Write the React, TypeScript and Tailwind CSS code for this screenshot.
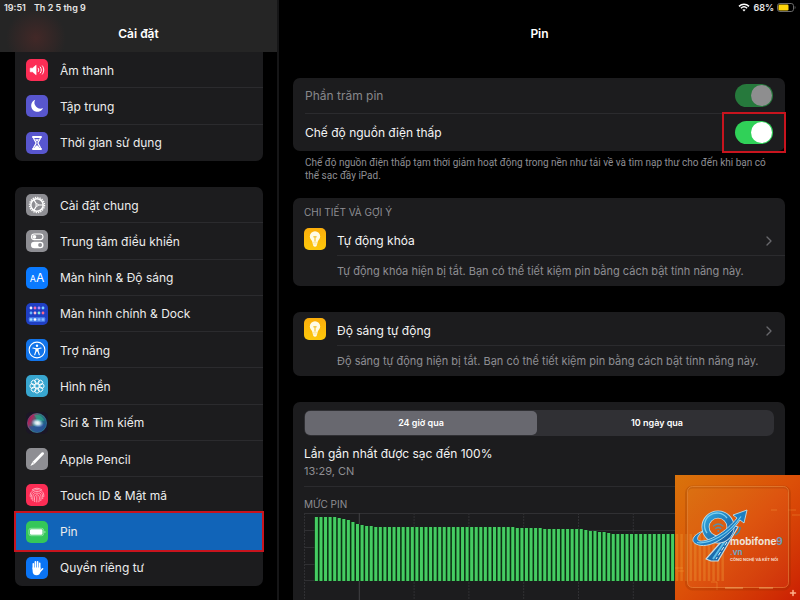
import type { ReactNode } from "react";
import { ChevronRight } from "lucide-react";
import clsx from "clsx";

interface SettingItem {
  label: string;
  tile: string;
  icon: ReactNode;
  active?: boolean;
}

/* ---------- sidebar glyphs, all on a 22 x 22 grid ---------- */

function Glyph({ children }: { children: ReactNode }) {
  return (
    <svg viewBox="0 0 22 22" className="h-full w-full" fill="none" aria-hidden>
      {children}
    </svg>
  );
}

function SoundIcon() {
  return (
    <Glyph>
      <path d="M4.2 9.2h2.3l3.6-3v9.6l-3.6-3H4.2z" fill="#fff" stroke="#fff" strokeWidth=".6" strokeLinejoin="round" />
      <g stroke="#fff" strokeWidth="1" strokeLinecap="round">
        <path d="M12.2 9.2c.8 1 .8 2.600 0 3.600" />
        <path d="M14.300 8c1.400 1.800 1.400 4.200 0 6" />
        <path d="M16.400 6.900c1.900 2.500 1.900 5.700 0 8.200" />
      </g>
    </Glyph>
  );
}

function MoonIcon() {
  return (
    <Glyph>
      <path d="M9.200 4.800a6 6 0 0 0 7.900 8.200A6.200 6.200 0 1 1 9.200 4.800z" fill="#fff" />
    </Glyph>
  );
}

function HourglassIcon() {
  return (
    <Glyph>
      <path
        d="M7.500 5c0 3.200 2.500 4.200 2.500 6s-2.500 2.800-2.500 6h7c0-3.200-2.500-4.200-2.500-6s2.500-2.800 2.500-6z"
        stroke="#fff"
        strokeWidth="1.300"
        strokeLinejoin="round"
      />
      <path d="M7 4.900h8M7 17.100h8" stroke="#fff" strokeWidth="2" strokeLinecap="round" />
      <path d="M9 7.300h4L11 9.800zM8.300 16.500c.4-1.600 1.500-2.400 2.700-3.200 1.200.8 2.300 1.600 2.700 3.200z" fill="#fff" />
    </Glyph>
  );
}

function GearIcon() {
  return (
    <Glyph>
      <circle cx="11" cy="11" r="7.500" stroke="#fff" strokeWidth="1.400" strokeDasharray="1.300 1.056" />
      <circle cx="11" cy="11" r="6.200" stroke="#fff" strokeWidth="1.500" />
      <path d="M12 11h5M10.500 10.100 8 5.900M10.500 11.900l-2.500 4.200" stroke="#fff" strokeWidth="1.100" />
      <circle cx="11" cy="11" r="1.200" stroke="#fff" strokeWidth=".9" />
    </Glyph>
  );
}

function ControlCenterIcon() {
  return (
    <Glyph>
      <rect x="5.500" y="4" width="11.500" height="5.600" rx="2.800" stroke="#fff" strokeWidth="1.100" />
      <circle cx="8.400" cy="6.800" r="1.900" fill="#fff" />
      <rect x="5" y="11.700" width="12.500" height="6.600" rx="3.300" fill="#fff" />
      <circle cx="14.100" cy="15" r="2" fill="#8e8e93" />
    </Glyph>
  );
}

function DisplayIcon() {
  return (
    <span className="text-[12px] leading-none text-white">
      <span className="text-[9px]">A</span>A
    </span>
  );
}

const dockDots = [
  ["#e8f0ff", "#f06ab0", "#b38cff", "#7fd0ff"],
  ["#6ab8ff", "#ffb8d0", "#7ce8e0", "#ff6a8c"],
];

function DockIcon() {
  return (
    <Glyph>
      {dockDots.map((row, y) =>
        row.map((fill, x) => (
          <circle key={`${x}-${y}`} cx={5 + x * 4} cy={5 + y * 5} r="1.400" fill={fill} />
        )),
      )}
      <rect x="2.800" y="14.300" width="16.400" height="4.400" rx="1" fill="#4f87f0" />
      {["#9fe0ff", "#fff", "#8cb8ff", "#8cb8ff"].map((fill, x) => (
        <circle key={x} cx={5 + x * 4} cy="16.500" r="1.300" fill={fill} />
      ))}
    </Glyph>
  );
}

function AccessibilityIcon() {
  return (
    <Glyph>
      <circle cx="11" cy="11" r="7.900" stroke="#fff" strokeWidth="1.100" />
      <circle cx="11" cy="6.800" r="1.200" fill="#fff" />
      <path
        d="M6.900 9l3.100.7v2.300L8.700 15.700M15.100 9l-3.100.7v2.300l1.300 3.700"
        stroke="#fff"
        strokeWidth="1.100"
        strokeLinecap="round"
        strokeLinejoin="round"
      />
      <path d="M9.800 9.300h2.400v3.200H9.800z" fill="#fff" />
    </Glyph>
  );
}

function WallpaperIcon() {
  return (
    <Glyph>
      {[0, 45, 90, 135, 180, 225, 270, 315].map((deg) => (
        <circle key={deg} cx="11" cy="6.200" r="2.300" stroke="#fff" strokeWidth=".9" transform={`rotate(${deg} 11 11)`} />
      ))}
      <circle cx="11" cy="11" r="2.100" stroke="#fff" strokeWidth=".9" />
    </Glyph>
  );
}

function SiriIcon() {
  return (
    <Glyph>
      <defs>
        <radialGradient id="siri-core">
          <stop offset="0" stopColor="#fff" />
          <stop offset=".4" stopColor="#e8f4ff" stopOpacity=".8" />
          <stop offset="1" stopColor="#8cc8ff" stopOpacity="0" />
        </radialGradient>
        <linearGradient id="siri-orb" x1="0" y1="0" x2="1" y2=".5">
          <stop offset="0" stopColor="#3a1030" />
          <stop offset=".25" stopColor="#b0225c" />
          <stop offset=".55" stopColor="#2f7a78" />
          <stop offset="1" stopColor="#1d5a8c" />
        </linearGradient>
      </defs>
      <circle cx="11" cy="11" r="9.800" fill="url(#siri-orb)" />
      <path d="M3 14c4 1 8-1 16-2-1 5-4.500 8-8 8s-6.500-2-8-6z" fill="#2d4f9c" opacity=".75" />
      <path d="M8 3c5-1 9 2 10.500 6-3-1-5 1-7.500 2C11 8 10 5 8 3z" fill="#2cae8c" opacity=".6" />
      <ellipse cx="11.500" cy="11" rx="6.500" ry="4.500" fill="url(#siri-core)" transform="rotate(12 11.500 11)" />
      <circle cx="11" cy="11" r="9.600" stroke="#5a9cc0" strokeWidth=".5" opacity=".6" />
    </Glyph>
  );
}

function PencilIcon() {
  return (
    <Glyph>
      <path d="M15.700 4.600a1.300 1.300 0 0 1 1.900 1.900L8.400 15.900l-4 2.100 2-4.100z" fill="#fff" />
      <path d="M6.500 14l1.800 1.800" stroke="#8e8e93" strokeWidth=".6" />
    </Glyph>
  );
}

function TouchIdIcon() {
  return (
    <Glyph>
      <g stroke="#ffc4cf" strokeWidth=".8" strokeLinecap="round">
        <path d="M6.200 5.800a7.500 7.500 0 0 1 9.600 0" />
        <path d="M4.200 12.500C3.600 8.500 6.500 5.700 11 5.700s7.400 2.800 6.800 6.800" />
        <path d="M5.300 15c-.5-4.500 1-7.600 5.700-7.600s6.200 3.100 5.700 7.300" />
        <path d="M6.900 16.700C6.400 12 7 9.100 11 9.100s4.600 2.900 3.800 7.500" />
        <path d="M8.700 17.600c-.5-4-.4-6.800 2.300-6.800s2.700 3.200 1.900 7" />
        <path d="M10.800 12.500V18" />
      </g>
    </Glyph>
  );
}

function BatteryTileIcon() {
  return (
    <Glyph>
      <rect x="2.900" y="7.300" width="14.700" height="7.400" rx="2" stroke="#b8f0c4" strokeWidth=".6" />
      <rect x="4" y="8.300" width="12.500" height="5.400" rx="1.200" fill="#fff" />
      <path d="M18.600 9.700c1 .4 1 2.200 0 2.600z" fill="#d8f8e0" />
    </Glyph>
  );
}

function HandIcon() {
  return (
    <Glyph>
      <path d="M6.600 10.500h7.900v3.500c0 2.700-1.600 4.300-3.900 4.300-2.600 0-4-1.600-4-4.300z" fill="#fff" />
      <path
        d="M7.300 12V6.800M9.400 11V4.700M11.600 11V4.700M13.700 11.500V6.300M13.300 15.300l3.300-3.500"
        stroke="#fff"
        strokeWidth="1.600"
        strokeLinecap="round"
      />
    </Glyph>
  );
}

function BulbIcon() {
  return (
    <Glyph>
      <path
        d="M11 3.300a5.200 5.200 0 0 1 5.200 5.200c0 2.300-1.700 3.400-2.300 4.800-.6 1.600-.7 3.300-1.300 4.600-.5 1.100-2.700 1.100-3.200 0-.6-1.300-.7-3-1.300-4.600-.6-1.400-2.300-2.500-2.300-4.800A5.200 5.200 0 0 1 11 3.300z"
        fill="#fffbe6"
      />
      <path d="M9.300 8.800h3.400M11 8.800v4.700" stroke="#f0b400" strokeWidth=".9" />
      <path d="M9 14.300h4M9.300 16h3.400" stroke="#f6cf4a" strokeWidth=".5" />
    </Glyph>
  );
}

const topItems: SettingItem[] = [
  { label: "Âm thanh", tile: "bg-[#fc2d55]", icon: <SoundIcon /> },
  { label: "Tập trung", tile: "bg-[#5856ce]", icon: <MoonIcon /> },
  { label: "Thời gian sử dụng", tile: "bg-[#5856ce]", icon: <HourglassIcon /> },
];

const mainItems: SettingItem[] = [
  { label: "Cài đặt chung", tile: "bg-[#8e8e93]", icon: <GearIcon /> },
  { label: "Trung tâm điều khiển", tile: "bg-[#8e8e93]", icon: <ControlCenterIcon /> },
  { label: "Màn hình & Độ sáng", tile: "bg-[#0a7aff]", icon: <DisplayIcon /> },
  { label: "Màn hình chính & Dock", tile: "bg-[#1f3fc4]", icon: <DockIcon /> },
  { label: "Trợ năng", tile: "bg-[#1274ea]", icon: <AccessibilityIcon /> },
  { label: "Hình nền", tile: "bg-[#38a6cf]", icon: <WallpaperIcon /> },
  { label: "Siri & Tìm kiếm", tile: "bg-[#1b1626]", icon: <SiriIcon /> },
  { label: "Apple Pencil", tile: "bg-[#8e8e93]", icon: <PencilIcon /> },
  { label: "Touch ID & Mật mã", tile: "bg-[#fc2d55]", icon: <TouchIdIcon /> },
  { label: "Pin", tile: "bg-[#34c759]", icon: <BatteryTileIcon />, active: true },
  { label: "Quyền riêng tư", tile: "bg-[#0a74f5]", icon: <HandIcon /> },
];

function SidebarRow({ item, last, beforeActive }: { item: SettingItem; last: boolean; beforeActive: boolean }) {
  return (
    <li className="flex">
      <a
        href="#"
        aria-current={item.active ? "page" : undefined}
        className={clsx("relative flex flex-1 items-center gap-3 pl-[11px]", item.active && "bg-[#1164b8]")}
      >
        <span className={clsx("flex h-[22px] w-[22px] shrink-0 items-center justify-center overflow-hidden rounded-[5px]", item.tile)}>
          {item.icon}
        </span>
        <span
          className={clsx(
            "flex flex-1 items-center self-stretch border-b pt-[2px] text-[12px] text-[#ececec]",
            last || item.active || beforeActive ? "border-transparent" : "border-[#2b2b2e]",
          )}
        >
          {item.label}
        </span>
        {item.active && <span className="absolute -inset-x-px -inset-y-[2px] border-2 border-[#c8141e]" />}
      </a>
    </li>
  );
}

function SidebarGroup({ items, className }: { items: SettingItem[]; className?: string }) {
  return (
    <ul className={clsx("grid auto-rows-fr bg-[#1c1c1e]", className)}>
      {items.map((item, i) => (
        <SidebarRow key={item.label} item={item} last={i === items.length - 1} beforeActive={!!items[i + 1]?.active} />
      ))}
    </ul>
  );
}

function Switch({ id, disabled }: { id: string; disabled?: boolean }) {
  return (
    <input
      id={id}
      type="checkbox"
      role="switch"
      defaultChecked
      disabled={disabled}
      className="flex h-[23px] w-[38px] appearance-none justify-end rounded-full bg-[#30d158] p-px before:h-[21px] before:w-[21px] before:rounded-full before:bg-white disabled:bg-[#26793c] disabled:before:bg-[#8e8e8f]"
    />
  );
}

function Suggestion({ title, note }: { title: string; note: string }) {
  return (
    <div className="flex gap-[11px]">
      <span className="mt-[6px] h-[22px] w-[22px] shrink-0 overflow-hidden rounded-[5px] bg-gradient-to-b from-[#fcae0b] to-[#fcc80b]">
        <BulbIcon />
      </span>
      <div className="flex-1">
        <a href="#" className="flex h-[34px] items-center justify-between border-b border-[#2b2b2e] pt-1 pr-2 text-[12px] text-[#f4f4f4]">
          {title}
          <ChevronRight className="h-4 w-4 text-[#68686c]" strokeWidth={2} />
        </a>
        <p className="flex h-[30px] items-center text-[11px] text-[#8e8e93]">{note}</p>
      </div>
    </div>
  );
}

/* Battery level per slot, as bar height in px. */
const levels = [
  ...Array(5).fill(64),
  63, 62, 61, 59, 57, 56, 55, 55,
  ...Array(31).fill(54),
  ...Array(6).fill(53),
  ...Array(9).fill(52),
  51, 50, 50, 49, 49, 48,
  ...Array(25).fill(47),
];

function BatteryChart() {
  const slot = 54.8 / 12;
  return (
    <svg viewBox="0 0 470 110" preserveAspectRatio="none" className="h-[110px] w-full" role="img" aria-label="Mức pin">
      <g stroke="#303033" strokeWidth="1">
        {[0.5, 17.5, 34.5, 51.5, 67.5].map((y) => (
          <path key={y} d={`M0 ${y}H439`} />
        ))}
        {Array.from({ length: 9 }).map((_, i) => (
          <path
            key={i}
            d={`M${0.5 + i * 54.8} 0V110`}
            stroke={i === 1 ? "#414144" : "#303033"}
            strokeDasharray={i === 1 ? undefined : "2 1"}
          />
        ))}
      </g>
      {levels.map((h, i) => (
        <g key={i}>
          <rect x={10.4 + i * slot} y={68 - h} width={slot + 0.1} height={h} fill="#0b3314" />
          <rect x={10.9 + i * slot} y={68 - h} width="3" height={h} fill="#45cc62" />
        </g>
      ))}
    </svg>
  );
}

function BrandBadge() {
  return (
    <div className="absolute right-0 bottom-0 h-[125px] w-[125px] overflow-hidden bg-gradient-to-br from-[#d9730b] via-[#dc4f08] to-[#cb1d03]">
      <svg viewBox="0 0 125 125" className="absolute inset-0 h-full w-full" fill="none" aria-hidden>
        <defs>
          <linearGradient id="nine" x1="0" y1="0" x2="1" y2="1">
            <stop offset="0" stopColor="#2fa4dc" />
            <stop offset="1" stopColor="#155a9c" />
          </linearGradient>
        </defs>
        <g stroke="#f5a83a" strokeWidth="2.500" opacity=".3">
          {Array.from({ length: 11 }).map((_, i) => (
            <path key={i} d={`M${2 + i * 4.57} 59V106`} />
          ))}
        </g>
        <g stroke="#ffb84d" opacity=".3">
          <path d="M0 93h8M3 96h6M113 35h8M117 40h8M36 107h6v8" />
          <path d="M96 35h6" />
        </g>
        <rect x="11.500" y="12" width="103" height="102" rx="6" stroke="#7a2600" strokeWidth="3" opacity=".2" />
        <rect x="12.500" y="11.500" width="101" height="101" rx="5" fill="#fff" fillOpacity=".03" stroke="#f59a4c" strokeOpacity=".5" />
        <path d="M50 113h18M84 113h14" stroke="#ffd28a" opacity=".6" />
        {/* stem of the nine */}
        <path d="M57 50 47 66 31 84 36 86 43 86 63 52z" fill="#1a6cad" stroke="#c9dbe2" strokeWidth="1.200" strokeLinejoin="round" />
        <path d="M54 60 38 84" stroke="#5cc0ea" strokeWidth="2" />
        <path d="M52 67 41 84" stroke="#e8f4f8" strokeWidth="1" strokeDasharray="4 2" />
        {/* ring */}
        <circle cx="43" cy="52" r="12.500" stroke="#c9dbe2" strokeWidth="8" />
        <circle cx="43" cy="52" r="12.500" stroke="url(#nine)" strokeWidth="6.400" />
        <path d="M32 58a12.500 12.500 0 0 1 20-15" stroke="#7fd0ee" strokeWidth="1.300" />
        {/* swoosh and arrow */}
        <path
          d="M28 56c-10 4-13 10-7 13 12 6 32-6 44-24l4 3 3-13-14 5 4 3C51 57 34 67 25 66c-4-1-3-5 3-10z"
          fill="#1d7fc2"
          stroke="#bfe0ea"
          strokeWidth=".9"
          strokeLinejoin="round"
        />
        <path d="M22 67.500c12 2 32-8 44-26" stroke="#74cdf0" strokeWidth="1.200" />
        <path d="M60 60c4-2 5-5 5-8" stroke="#2f90b8" strokeWidth="1.500" />
        <g stroke="#5a8fa6" strokeWidth="1.300" strokeLinecap="round">
          <path d="M38.500 51c3-2.500 6.500-2.500 9.500 0M40.700 53.600c1.700-1.500 3.400-1.500 5.100 0" />
          <path d="M43.200 56h.2" strokeWidth="1.800" />
        </g>
        <path d="M118 115.500v5M115.500 118h5" stroke="#ffb08c" strokeWidth="1.500" strokeLinecap="round" />
      </svg>
      <div className="absolute top-[60px] left-[55px] font-bold whitespace-nowrap">
        <p className="text-[10px] leading-[12px] text-[#efe2d8]">
          mobifone<span className="text-[#6f9cba]">9</span>
        </p>
        <p className="text-[8px] leading-[10px] text-[#6fa4c4]">.vn</p>
        <p className="text-[4px] leading-[6px] text-[#f6dccb]">CÔNG NGHỆ VÀ KẾT NỐI</p>
      </div>
    </div>
  );
}

export default function App() {
  return (
    <div className="relative flex h-screen overflow-hidden bg-black font-['Inter','Liberation_Sans',sans-serif] text-white">
      <aside className="w-[279px] shrink-0 border-r-2 border-[#161617]">
        <header className="h-[52px] bg-[#252525] bg-[radial-gradient(circle_at_36px_38px,#422827_0,#252525_30px)]">
          <div className="flex h-[15px] items-center gap-2 pl-1 text-[9px] font-semibold text-[#e6e6e6]">
            <time>19:51</time>
            <span>Th 2 5 thg 9</span>
          </div>
          <h2 className="flex h-[37px] items-center justify-center text-[12px] font-semibold">Cài đặt</h2>
        </header>
        <nav className="flex flex-col gap-[26px] pr-[14px] pl-[15px]">
          <SidebarGroup items={topItems} className="h-[109px] rounded-b-[7px]" />
          <SidebarGroup items={mainItems} className="h-[399px] rounded-[7px]" />
        </nav>
      </aside>

      <main className="flex-1">
        <header className="h-[52px]">
          <div className="flex h-[15px] items-center justify-end gap-[3px] pr-1 text-[9px] font-semibold text-[#e6e6e6]">
            <svg viewBox="0 0 12 9" className="h-[9px] w-3" fill="none" aria-hidden>
              <path d="M1 3.400c2.900-2.800 7.100-2.800 10 0M2.900 5.300c1.800-1.700 4.400-1.700 6.200 0" stroke="#fff" strokeWidth="1.500" />
              <path d="M4.400 6.800c.9-.9 2.300-.9 3.200 0L6 8.500z" fill="#fff" />
            </svg>
            <span>68%</span>
            <svg viewBox="0 0 19 9" className="h-[9px] w-[19px]" fill="none" aria-hidden>
              <rect x=".5" y=".5" width="16" height="8" rx="2.300" stroke="#6c6c6c" />
              <rect x="1.500" y="1.500" width="10" height="6" rx="1.200" fill="#ffd60a" />
              <path d="M17.700 3c1.100.4 1.100 2.600 0 3z" fill="#6c6c6c" />
            </svg>
          </div>
          <h1 className="flex h-[37px] items-center justify-center text-[12px] font-semibold">Pin</h1>
        </header>

        <div className="flex flex-col pt-[26px] pr-[15px] pl-[14px]">
          <section className="rounded-[7px] bg-[#1c1c1e] pl-3 text-[12px]">
            <div className="flex h-9 items-center justify-between border-b border-[#2b2b2e] pr-3">
              <label htmlFor="percent" className="text-[#87878a]">Phần trăm pin</label>
              <Switch id="percent" disabled />
            </div>
            <div className="flex h-[37px] items-center justify-between pr-3">
              <label htmlFor="low-power" className="text-[#f4f4f4]">Chế độ nguồn điện thấp</label>
              <span className="relative">
                <Switch id="low-power" />
                <span className="pointer-events-none absolute -inset-x-[13px] -inset-y-[9px] border-2 border-[#c8141e]" />
              </span>
            </div>
          </section>
          <p className="px-3 pt-[5px] font-['Roboto','Inter',sans-serif] text-[10px] leading-[13px] text-[#8e8e93]">
            Chế độ nguồn điện thấp tạm thời giảm hoạt động trong nền như tải về và tìm nạp thư cho đến khi bạn có thể sạc đầy iPad.
          </p>

          <section className="mt-4 rounded-[7px] bg-[#1c1c1e] pl-[11px]">
            <h3 className="pt-2 pb-1 text-[10px] leading-[12px] text-[#8e8e93]">CHI TIẾT VÀ GỢI Ý</h3>
            <Suggestion title="Tự động khóa" note="Tự động khóa hiện bị tắt. Bạn có thể tiết kiệm pin bằng cách bật tính năng này." />
          </section>

          <section className="mt-[26px] rounded-[7px] bg-[#1c1c1e] pl-[11px]">
            <Suggestion title="Độ sáng tự động" note="Độ sáng tự động hiện bị tắt. Bạn có thể tiết kiệm pin bằng cách bật tính năng này." />
          </section>

          <section className="mt-[26px] rounded-[7px] bg-[#1c1c1e] px-[11px] pt-2">
            <div className="flex h-[26px] gap-1 rounded-[7px] bg-[#303034] p-px text-[9px] font-semibold">
              <button type="button" aria-pressed="true" className="flex-1 rounded-[5px] bg-[#68686f]">24 giờ qua</button>
              <button type="button" aria-pressed="false" className="flex-1">10 ngày qua</button>
            </div>
            <div className="border-b border-[#2b2b2e] pt-2 pb-[7px]">
              <p className="text-[12px] leading-[19px] text-[#f4f4f4]">Lần gần nhất được sạc đến 100%</p>
              <p className="text-[11px] leading-[16px] text-[#8e8e93]">13:29, CN</p>
            </div>
            <h3 className="pt-[11px] pb-[3px] text-[10px] leading-[12px] text-[#8e8e93]">MỨC PIN</h3>
            <BatteryChart />
          </section>
        </div>
      </main>

      <BrandBadge />
    </div>
  );
}
